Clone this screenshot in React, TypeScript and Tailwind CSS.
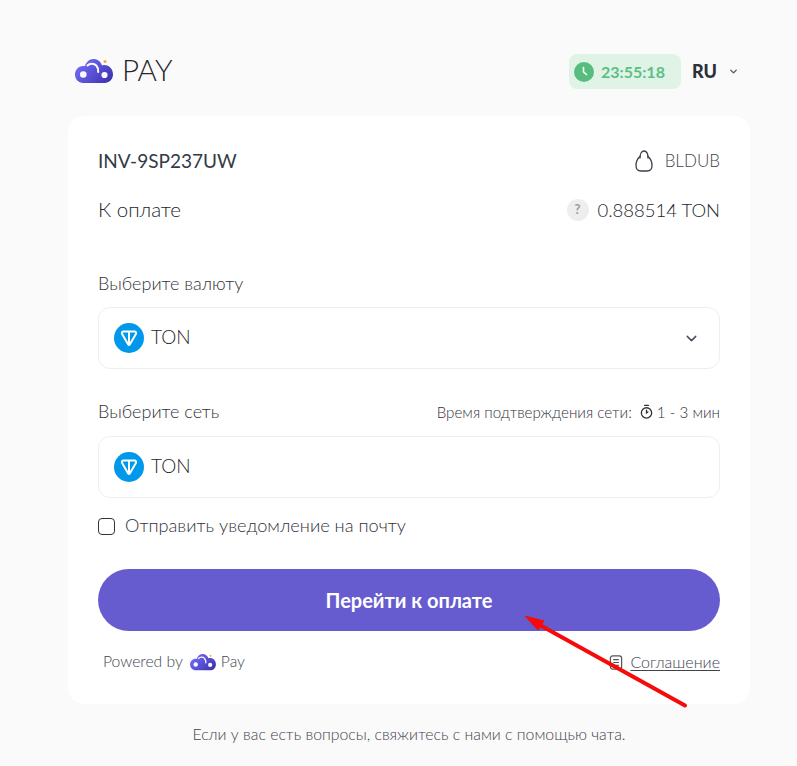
import { ChevronDown } from "lucide-react";

function CloudLogo({ className, id }: { className: string; id: string }) {
  return (
    <svg viewBox="0 0 38 25" className={className}>
      <defs>
        <linearGradient id={id} x1="8" y1="4" x2="30" y2="25" gradientUnits="userSpaceOnUse">
          <stop offset="0" stopColor="#6c66f2" />
          <stop offset="1" stopColor="#4236b2" />
        </linearGradient>
      </defs>
      <path
        d="M0 15.500C0 10.800 3.600 7 8 7c.6 0 1.200.1 1.800.2C11.300 2.800 14.600 0 18.500 0c3.900 0 7.200 2.400 8.500 6.400 1-.3 1.800-.4 2.500-.4 4.500 0 8.500 4 8.500 9.300 0 4.900-3.700 8.700-8.500 8.700H8c-4.400 0-8-3.700-8-8.500Z"
        fill={`url(#${id})`}
      />
      <circle cx="8.300" cy="15.500" r="3.300" fill="#fafafa" />
      <circle cx="29.500" cy="16" r="3.100" fill="#fafafa" />
      <path d="M12.500 6.500c2-2.300 6.500-2.600 8.800 0 1.500 1.600 2 3.800 1.900 6.500" stroke="#fafafa" strokeWidth="2" fill="none" strokeLinecap="round" />
      <circle cx="30" cy="2.500" r="1.500" fill="#f5a64c" />
    </svg>
  );
}

function TonIcon() {
  return (
    <svg viewBox="0 0 30 30" className="w-[30px] h-[30px] shrink-0">
      <circle cx="15" cy="15" r="15" fill="#0098ea" />
      <path
        d="M9.500 8.500h11c1.300 0 2.100 1.400 1.400 2.500L15.800 21.500c-.4.600-1.200.600-1.600 0L8.100 11c-.7-1.100.1-2.500 1.400-2.500Z"
        fill="none"
        stroke="#fff"
        strokeWidth="2"
        strokeLinejoin="round"
      />
      <path d="M15 9v12" stroke="#fff" strokeWidth="2" />
    </svg>
  );
}

function TonField({ chevron }: { chevron?: boolean }) {
  return (
    <div className="h-[62px] rounded-xl border border-[#eeeeee] bg-white pl-[15px] pr-[19px] flex items-center gap-[7px]">
      <TonIcon />
      <span className="pb-[2px] text-[19px] font-light text-[#23262e]">TON</span>
      {chevron && <ChevronDown className="ml-auto w-[17px] h-[17px] text-[#4a4a5a]" strokeWidth={2} />}
    </div>
  );
}

export default function App() {
  return (
    <div className="relative w-[797px] h-[766px] overflow-hidden bg-[#fafafa] font-['Lato',sans-serif] text-[#3a3f47]">
      <div className="ml-[68px] w-[682px] pt-[54px]">
        {/* header */}
        <div className="h-[35px] flex items-center pl-[7px]">
          <CloudLogo id="cloud-top" className="w-[38px] h-[25px]" />
          <span className="ml-[9px] pb-[3px] text-[29.500px] font-light text-[#26262b] leading-none">PAY</span>
          <div className="ml-auto h-[35px] w-[112px] rounded-lg bg-[#dff3e6] flex items-center pl-[5px] gap-[7px]">
            <svg viewBox="0 0 20 20" className="w-[20px] h-[20px]">
              <circle cx="10" cy="10" r="10" fill="#56bd7f" />
              <path d="M9.500 5.500V10l3 2.500" stroke="#fff" strokeWidth="1.600" fill="none" strokeLinecap="round" />
            </svg>
            <span className="text-[16px] font-bold text-[#5cbf85]">23:55:18</span>
          </div>
          <span className="ml-[11px] text-[18px] font-black text-[#2d3038]">RU</span>
          <ChevronDown className="ml-[11px] mr-[11px] w-[11px] h-[11px] text-[#555]" strokeWidth={3} />
        </div>

        {/* card */}
        <div className="mt-[27px] h-[588px] rounded-2xl bg-white px-[30px] pt-[32px]">
          <div className="h-[26px] flex items-center justify-between">
            <span className="text-[19px] text-[#333a45]">INV-9SP237UW</span>
            <div className="flex items-center gap-[12px]">
              <svg viewBox="0 0 18 22" className="w-[18px] h-[22px]" fill="none" stroke="#3a3f47" strokeWidth="1.300">
                <path d="M5 8C5 3.500 6.800 1 9 1s4 2.500 4 7" strokeLinecap="round" />
                <path d="M5 6.500C2.500 8.500 1 12 1 15.500 1 19.500 3 21 6 21h6c3 0 5-1.500 5-5.500 0-3.500-1.500-7-4-9" strokeLinecap="round" />
              </svg>
              <span className="text-[17px] font-light text-[#3f444c]">BLDUB</span>
            </div>
          </div>
          <div className="mt-[23px] h-[26px] flex items-center justify-between">
            <span className="pb-[2px] text-[20.500px] font-light text-[#23262e]">К оплате</span>
            <div className="flex items-center gap-[9px]">
              <span className="w-[22px] h-[22px] rounded-full bg-[#eeeeee] text-[#9a9a9a] text-[13px] font-bold flex items-center justify-center">?</span>
              <span className="pt-[1px] text-[18.500px] font-light text-[#23262e]">0.888514 TON</span>
            </div>
          </div>

          <div className="mt-[48px] h-[26px] flex items-center pb-[2px] text-[18px] font-light text-[#2f333a]">Выберите валюту</div>
          <div className="mt-[10px]">
            <TonField chevron />
          </div>

          <div className="mt-[30px] h-[26px] flex items-center justify-between">
            <span className="pb-[2px] text-[18px] font-light text-[#2f333a]">Выберите сеть</span>
            <div className="flex items-center text-[15.200px] font-light text-[#2f333a]">
              <span>Время подтверждения сети:</span>
              <svg viewBox="0 0 16 16" className="w-[15px] h-[15px] ml-[7px] mr-[3px]" fill="none" stroke="#333" strokeWidth="1.400">
                <circle cx="8" cy="9.500" r="5.500" />
                <path d="M6 1.500h4M8 6.500v3l1.500-1" strokeLinecap="round" />
              </svg>
              <span>1 - 3 мин</span>
            </div>
          </div>
          <div className="mt-[11px]">
            <TonField />
          </div>

          <label className="mt-[19px] h-[18px] flex items-center gap-[10px]">
            <span className="w-[17px] h-[17px] rounded-[4px] border-[1.500px] border-[#33333d] bg-white" />
            <span className="text-[18.200px] font-light text-[#2f333a]">Отправить уведомление на почту</span>
          </label>

          <button className="mt-[34px] w-full h-[62px] rounded-[31px] bg-[#665cd0] text-white text-[20px] font-bold">
            Перейти к оплате
          </button>

          <div className="mt-[21px] h-[20px] flex items-center pl-[5px] text-[15.700px] font-light text-[#3f444c]">
            <span>Powered by</span>
            <CloudLogo id="cloud-footer" className="ml-[7px] w-[26px] h-[17px]" />
            <span className="ml-[5px]">Pay</span>
            <div className="ml-auto flex items-center gap-[7px]">
              <svg viewBox="0 0 14 16" className="w-[14px] h-[15px]" fill="none" stroke="#555" strokeWidth="1.300">
                <rect x="1" y="1" width="12" height="14" rx="2.500" />
                <path d="M4 5h6M4 8h6M4 11h6" />
              </svg>
              <span className="underline underline-offset-2 text-[16px]">Соглашение</span>
            </div>
          </div>
        </div>

        <p className="mt-[18px] text-center text-[15.800px] font-light text-[#3f444c]">
          Если у вас есть вопросы, свяжитесь с нами с помощью чата.
        </p>
      </div>

      {/* red annotation arrow drawn over the page */}
      <svg viewBox="0 0 797 766" className="absolute inset-0 w-[797px] h-[766px] pointer-events-none">
        <path d="M685 705.500 L538 624" stroke="#f60a0a" strokeWidth="4" strokeLinecap="round" />
        <path d="M525 616 L544 621 L538 630 Z" fill="#f60a0a" stroke="#f60a0a" strokeWidth="1" />
      </svg>
    </div>
  );
}
